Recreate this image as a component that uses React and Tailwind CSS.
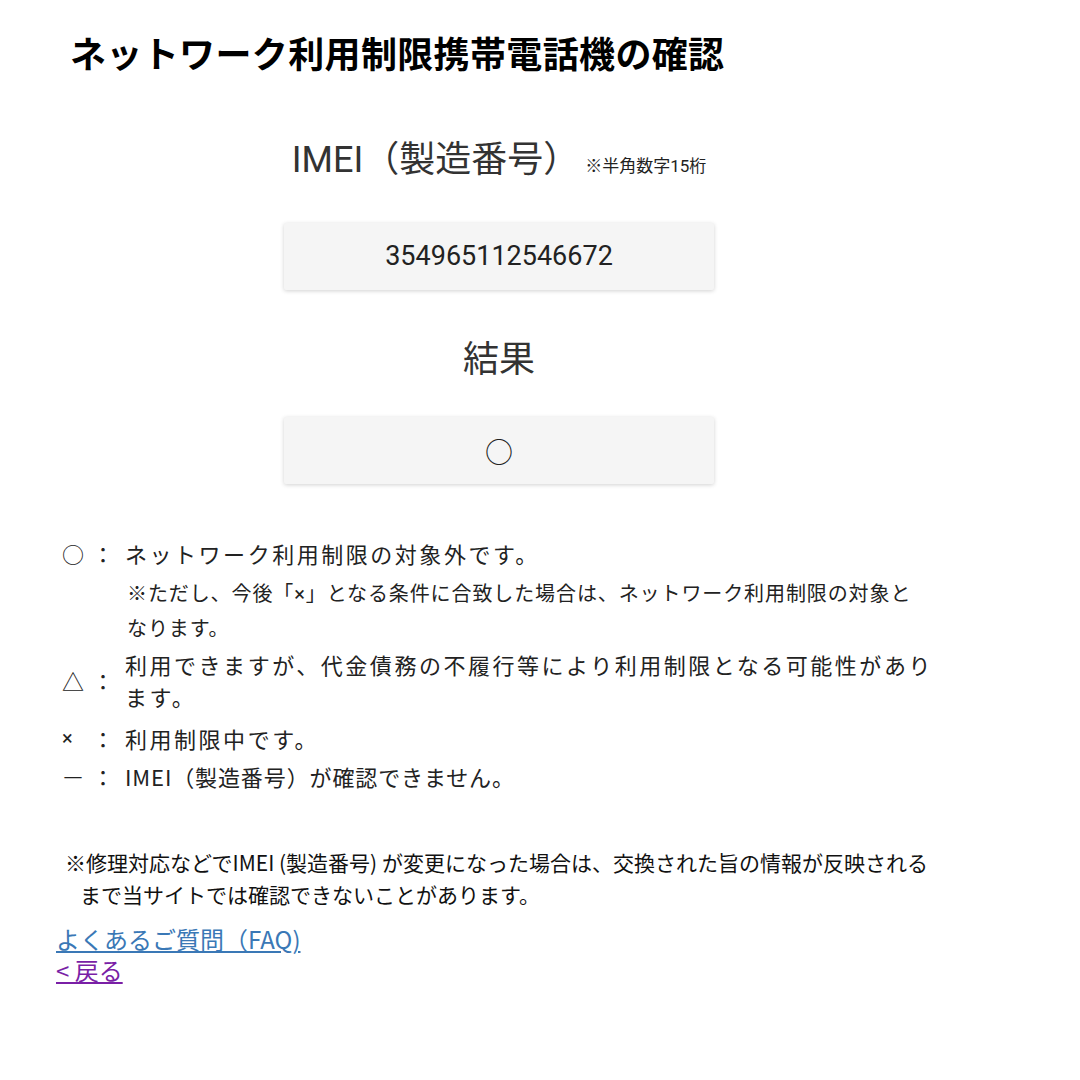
export default function App() {
  const jp = { fontFamily: "Roboto, 'Noto Sans CJK JP', sans-serif" };
  const cjk = { fontFamily: "'Noto Sans CJK JP', sans-serif" };
  const x = { fontFamily: "Roboto, sans-serif" };
  return (
    <div className="w-[1080px] h-[1080px] bg-white overflow-hidden" style={jp}>
      <h1 className="pt-[26px] pl-[70px] text-[36px] font-bold leading-[52px] text-black tracking-[0.01em]" style={cjk}>
        ネットワーク利用制限携帯電話機の確認
      </h1>

      <div className="w-[998px] flex flex-col items-center">
        <div className="mt-[57px] flex items-baseline gap-[6px] text-[#333]">
          <span className="text-[36px] leading-[50px]">IMEI（製造番号）</span>
          <span className="text-[17px] text-[#222]">※半角数字15桁</span>
        </div>
        <div className="mt-[38px] w-[430px] h-[67px] bg-[#f5f5f5] rounded-[2px] shadow-[0_1px_4px_rgba(0,0,0,0.18)] flex items-center justify-center text-[27px] text-[#222]">
          354965112546672
        </div>
        <div className="mt-[45px] text-[36px] leading-[50px] text-[#333]">結果</div>
        <div className="mt-[32px] w-[430px] h-[67px] bg-[#f5f5f5] rounded-[2px] shadow-[0_1px_4px_rgba(0,0,0,0.18)] flex items-center justify-center text-[28px] text-[#222]" style={cjk}>
          ○
        </div>
      </div>

      <div className="mt-[53px] pl-[62px] text-[#222]" style={cjk}>
        <div className="flex items-center text-[22px] leading-[32px]">
          <span className="w-[30px]">○</span>
          <span className="w-[22px] text-center">：</span>
          <span className="ml-[11px] w-[830px] tracking-[0.115em]">ネットワーク利用制限の対象外です。</span>
        </div>
        <p className="mt-[7px] ml-[65px] w-[795px] text-[20px] leading-[33px] tracking-[0.045em]">
          ※ただし、今後「<span style={x}>×</span>」となる条件に合致した場合は、ネットワーク利用制限の対象となります。
        </p>
        <div className="mt-[4px] flex items-center text-[22px] leading-[32px]">
          <span className="w-[30px]">△</span>
          <span className="w-[22px] text-center">：</span>
          <span className="ml-[11px] w-[830px] tracking-[0.115em]">利用できますが、代金債務の不履行等により利用制限となる可能性があります。</span>
        </div>
        <div className="mt-[10px] flex items-center text-[22px] leading-[32px]">
          <span className="w-[30px] text-[20px]" style={x}>×</span>
          <span className="w-[22px] text-center">：</span>
          <span className="ml-[11px] w-[830px] tracking-[0.115em]">利用制限中です。</span>
        </div>
        <div className="mt-[6px] flex items-center text-[22px] leading-[32px]">
          <span className="w-[30px] font-light">ー</span>
          <span className="w-[22px] text-center">：</span>
          <span className="ml-[11px] w-[830px] tracking-[0.04em]">IMEI（製造番号）が確認できません。</span>
        </div>
      </div>

      <p className="mt-[54px] ml-[65px] w-[880px] pl-[15px] -indent-[15px] text-[21px] leading-[32px] text-[#111]" style={cjk}>
        ※修理対応などでIMEI (製造番号) が変更になった場合は、交換された旨の情報が反映されるまで当サイトでは確認できないことがあります。
      </p>

      <div className="mt-[13px] ml-[56px] flex flex-col items-start text-[24px] leading-[31px]" style={cjk}>
        <a href="#" className="block text-[#3a78b6] underline">よくあるご質問（FAQ)</a>
        <a href="#" className="block text-[#7a1fa6] underline">&lt; 戻る</a>
      </div>
    </div>
  );
}
